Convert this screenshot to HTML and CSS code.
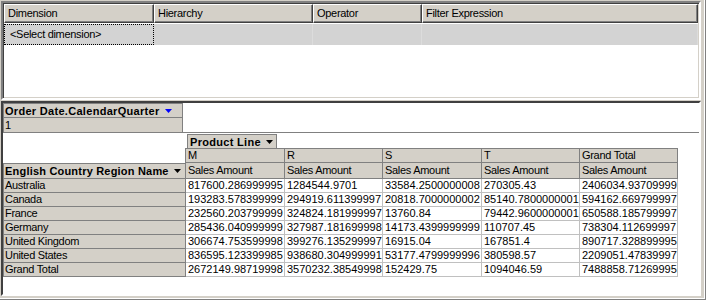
FILE: index.html
```html
<!DOCTYPE html>
<html lang="en">
<head>
  <meta charset="UTF-8" />
  <title>Filter and pivot</title>
  <link rel="stylesheet" href="styles.css">
</head>
<body>

<div class="window">
  <!-- filter grid -->
  <div class="filter-panel">
    <div class="filter-head">
      <div class="head-cell col-dim">Dimension</div>
      <div class="head-cell col-hier">Hierarchy</div>
      <div class="head-cell col-op">Operator</div>
      <div class="head-cell col-expr">Filter Expression</div>
    </div>
    <div class="filter-row">
      <div class="row-cell col-dim focused">&lt;Select dimension&gt;</div>
      <div class="row-cell col-hier"></div>
      <div class="row-cell col-op"></div>
      <div class="row-cell col-expr"></div>
    </div>
  </div>

  <!-- pivot table -->
  <div class="pivot-panel">
    <div class="page-area">
      <div class="page-field">
        <div class="field-btn page-btn">Order Date.CalendarQuarter<svg class="arrow" width="7" height="4" viewBox="0 0 7 4"><polygon points="0,0 7,0 3.5,4" fill="#0000ff"/></svg></div>
        <div class="page-value">1</div>
      </div>
    </div>

    <div class="pivot">
      <div class="blank"></div>
      <div class="col-area">
        <div class="field-btn col-btn">Product Line<svg class="arrow" width="7" height="4" viewBox="0 0 7 4"><polygon points="0,0 7,0 3.5,4" fill="#000"/></svg></div>
      </div>

      <div class="blank"></div>
      <div class="col-head first">M</div>
      <div class="col-head">R</div>
      <div class="col-head">S</div>
      <div class="col-head">T</div>
      <div class="col-head">Grand Total</div>

      <div class="field-btn row-btn">English Country Region Name<svg class="arrow" width="7" height="4" viewBox="0 0 7 4"><polygon points="0,0 7,0 3.5,4" fill="#000"/></svg></div>
      <div class="measure">Sales Amount</div>
      <div class="measure">Sales Amount</div>
      <div class="measure">Sales Amount</div>
      <div class="measure">Sales Amount</div>
      <div class="measure">Sales Amount</div>
    </div>
  </div>
</div>

<script>
  const rows = [
    ["Australia", "817600.286999995", "1284544.9701", "33584.2500000008", "270305.43", "2406034.93709999"],
    ["Canada", "193283.578399999", "294919.611399997", "20818.7000000002", "85140.7800000001", "594162.669799997"],
    ["France", "232560.203799999", "324824.181999997", "13760.84", "79442.9600000001", "650588.185799997"],
    ["Germany", "285436.040999999", "327987.181699998", "14173.4399999999", "110707.45", "738304.112699997"],
    ["United Kingdom", "306674.753599998", "399276.135299997", "16915.04", "167851.4", "890717.328899995"],
    ["United States", "836595.123399985", "938680.304999991", "53177.4799999996", "380598.57", "2209051.47839997"],
    ["Grand Total", "2672149.98719998", "3570232.38549998", "152429.75", "1094046.59", "7488858.71269995"]
  ];

  const pivot = document.querySelector('.pivot');

  rows.forEach(row => {
    row.forEach((value, i) => {
      const cell = document.createElement('div');
      cell.className = i === 0 ? 'row-head' : 'data';
      cell.textContent = value;
      pivot.appendChild(cell);
    });
  });
</script>

</body>
</html>
```

FILE: styles.css
```css
body {
  margin: 0;
  background-color: #d4d0c8;
  font-family: "Liberation Sans", Arial, sans-serif;
  font-size: 11px;
  color: #000;
}

.window {
  width: 706px;
  height: 300px;
  box-sizing: border-box;
  padding: 1px 0 0 1px;
  box-shadow: inset -1px -1px #808080, inset -2px -2px #fff;
}

/* filter grid */

.filter-panel {
  width: 700px;
  height: 99px;
  box-sizing: border-box;
  padding: 1px;
  border: 2px solid;
  border-color: #808080 #fff #fff #808080;
  box-shadow: inset 1px 1px #404040, inset -1px -1px #d4d0c8;
  background-color: #fff;
}

.filter-head,
.filter-row {
  display: flex;
}

.col-dim { width: 150px; }
.col-hier { width: 159px; }
.col-op { width: 109px; }
.col-expr { width: 276px; }

.head-cell {
  height: 19px;
  line-height: 17px;
  box-sizing: border-box;
  padding-left: 3px;
  background-color: #d4d0c8;
  border-top: 1px solid #fff;
  border-left: 1px solid #fff;
  border-right: 1px solid #404040;
  border-bottom: 1px solid #404040;
  box-shadow: inset -1px -1px #808080;
  letter-spacing: -0.3px;
  white-space: nowrap;
}

.filter-row {
  margin-top: 1px;
  background-color: #d3d3d3;
}

.row-cell {
  height: 21px;
  line-height: 21px;
  box-sizing: border-box;
  border-right: 1px solid #dcdcdc;
  letter-spacing: -0.3px;
}

.row-cell.focused {
  border: 1px dotted #000;
  line-height: 19px;
  padding-left: 5px;
}

/* pivot panel */

.pivot-panel {
  margin-top: 1px;
  width: 700px;
  height: 195px;
  box-sizing: border-box;
  border: 2px solid;
  border-color: #404040 #fff #fff #404040;
  background-color: #fff;
}

.page-area {
  height: 30px;
  box-sizing: border-box;
  border-bottom: 1px solid #808080;
}

.page-field {
  width: 180px;
}

.field-btn {
  display: flex;
  align-items: center;
  box-sizing: border-box;
  background-color: #d4d0c8;
  border: 1px solid #808080;
  font-weight: bold;
  white-space: nowrap;
}

.arrow {
  margin-left: 5px;
  flex: none;
}

.page-btn {
  height: 15px;
  padding-left: 1px;
  letter-spacing: 0.3px;
}

.page-value {
  height: 14px;
  line-height: 14px;
  box-sizing: border-box;
  padding-left: 1px;
  background-color: #d4d0c8;
  border-left: 1px solid #808080;
  border-right: 1px solid #808080;
}

.pivot {
  display: grid;
  grid-template-columns: 183px 99px 98px 99px 98px 98px;
  grid-template-rows: 15px 15px 16px repeat(7, 14px);
}

.col-area {
  grid-column: span 5;
}

.col-btn {
  width: 90px;
  height: 14px;
  margin: 1px 0 0 1px;
  padding-left: 2px;
  border-bottom: none;
  letter-spacing: 0.3px;
}

.col-head,
.measure,
.row-head,
.data {
  box-sizing: border-box;
  padding-left: 2px;
  overflow: hidden;
  white-space: nowrap;
}

.col-head {
  line-height: 13px;
  background-color: #d4d0c8;
  border-top: 1px solid #808080;
  border-right: 1px solid #808080;
  border-bottom: 1px solid #808080;
  letter-spacing: -0.3px;
}

.col-head.first {
  margin-left: -1px;
  border-left: 1px solid #808080;
}

.measure {
  line-height: 15px;
  background-color: #d4d0c8;
  border-right: 1px solid #808080;
  border-bottom: 1px solid #808080;
  letter-spacing: -0.3px;
}

.row-btn {
  padding-left: 1px;
  letter-spacing: 0.2px;
}

.row-head {
  line-height: 13px;
  padding-left: 1px;
  background-color: #d4d0c8;
  border-left: 1px solid #808080;
  border-right: 1px solid #808080;
  border-bottom: 1px solid #808080;
  letter-spacing: -0.3px;
}

.data {
  line-height: 13px;
  border-right: 1px solid #c0c0c0;
  border-bottom: 1px solid #c0c0c0;
}
```
